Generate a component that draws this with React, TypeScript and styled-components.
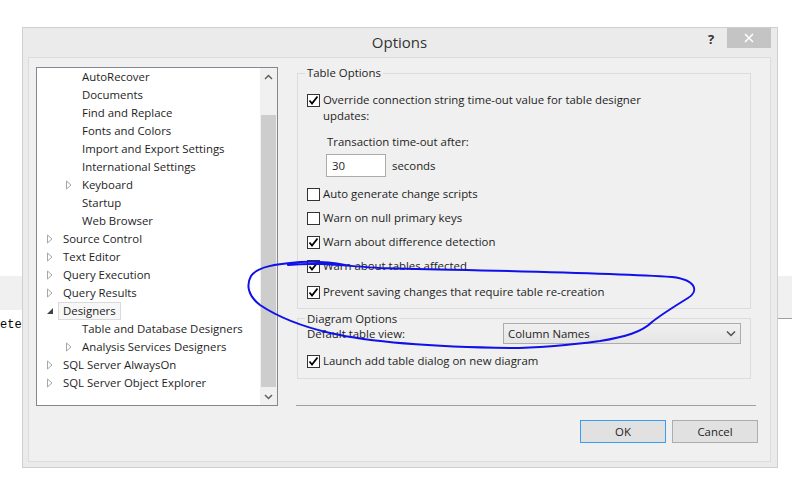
import styled, { createGlobalStyle } from 'styled-components';

const GlobalStyle = createGlobalStyle`
    html, body {
        margin: 0;
        padding: 0;
        background: #ffffff;
    }
    body {
        font-family: "Open Sans", "Noto Sans", sans-serif;
        font-size: 11.4px;
        color: #1e1e1e;
    }
`;

const Page = styled.div`
    position: relative;
    width: 792px;
    height: 477px;
    overflow: hidden;
    background: #ffffff;
`;

/* stuff from the window behind the dialog */
const Backdrop = styled.div`
    display: flex;
    flex-direction: column;
    padding-top: 276px;
`;

const BandRow = styled.div`
    display: flex;
    justify-content: space-between;
    align-items: flex-start;
`;

const Band = styled.div<{ $w: number; $h: number; $line?: boolean }>`
    width: ${p => p.$w}px;
    height: ${p => p.$h}px;
    background: #f0f0f0;
    border-bottom: ${p => (p.$line ? '1px solid #a0a0a0' : 'none')};
`;

const BehindText = styled.div`
    margin-top: -2px;
    font-family: "Liberation Mono", monospace;
    font-size: 12px;
    line-height: 16px;
    color: #000;
`;

const Dialog = styled.div`
    position: absolute;
    left: 22px;
    top: 27px;
    width: 756px;
    height: 441px;
    box-sizing: border-box;
    border: 1px solid #cfcfcf;
    background: #ebebeb;
    display: flex;
    flex-direction: column;
    padding: 0 6px 5px 5px;
`;

const TitleBar = styled.div`
    position: relative;
    height: 29px;
    display: flex;
    align-items: flex-start;
    justify-content: flex-end;
    flex-shrink: 0;
`;

const Title = styled.div`
    position: absolute;
    left: 0;
    right: 0;
    top: 4px;
    text-align: center;
    font-size: 15px;
    line-height: 20px;
    color: #333;
    pointer-events: none;
`;

const HelpButton = styled.div`
    width: 16px;
    margin-top: 3px;
    margin-right: 8px;
    font-size: 13px;
    font-weight: 700;
    line-height: 16px;
    color: #333;
    text-align: center;
`;

const CloseButton = styled.div`
    width: 44px;
    height: 20px;
    background: #c4c4c4;
    display: flex;
    align-items: center;
    justify-content: center;
`;

const Frame = styled.div`
    flex: 1;
    border: 1px solid #dcdcdc;
    background: #f0f0f0;
    display: flex;
    flex-direction: column;
`;

const TopRow = styled.div`
    display: flex;
    gap: 18px;
    padding: 9px 0 0 7px;
`;

const TreeBox = styled.div`
    width: 242px;
    height: 339px;
    box-sizing: border-box;
    border: 1px solid #828790;
    background: #ffffff;
    display: flex;
`;

const TreeList = styled.div`
    flex: 1;
    overflow: hidden;
    padding-top: 0;
`;

const TreeRow = styled.div<{ $level: number }>`
    height: 18px;
    display: flex;
    align-items: center;
    padding-left: ${p => (p.$level === 0 ? 9 : 28)}px;
`;

const Expander = styled.div`
    width: 16px;
    height: 18px;
    display: flex;
    align-items: center;
    justify-content: flex-start;
`;

const TreeLabel = styled.span<{ $selected?: boolean }>`
    line-height: 16px;
    padding: 0 4px;
    margin-left: -4px;
    border: 1px solid ${p => (p.$selected ? '#dadada' : 'transparent')};
    background: ${p => (p.$selected ? '#f7f7f7' : 'transparent')};
    white-space: nowrap;
`;

const ScrollBar = styled.div`
    width: 17px;
    background: #f0f0f0;
    display: flex;
    flex-direction: column;
`;

const ScrollArrow = styled.div`
    height: 17px;
    display: flex;
    align-items: center;
    justify-content: center;
    flex-shrink: 0;
`;

const ScrollTrack = styled.div`
    flex: 1;
    display: flex;
    flex-direction: column;
    padding: 30px 1px 1px;
`;

const ScrollThumb = styled.div`
    flex: 1;
    background: #cdcdcd;
`;

const RightColumn = styled.div`
    width: 460px;
    height: 339px;
    display: flex;
    flex-direction: column;
`;

const GroupBox = styled.div<{ $top: number; $bottom: number }>`
    margin: ${p => p.$top}px 5px 0 1px;
    border: 1px solid #dcdcdc;
    padding: 0 9px ${p => p.$bottom}px 9px;
    display: flex;
    flex-direction: column;
`;

const Legend = styled.div<{ $drop?: number }>`
    align-self: flex-start;
    margin: ${p => -9 + (p.$drop ?? 0)}px 0 0 -2px;
    padding: 0 2px;
    line-height: 16px;
    background: #f0f0f0;
`;

const CheckRow = styled.div<{ $top: number }>`
    display: flex;
    align-items: flex-start;
    gap: 3px;
    margin-top: ${p => p.$top}px;
    line-height: 16px;
`;

const Box = styled.div`
    width: 13px;
    height: 13px;
    box-sizing: border-box;
    border: 1px solid #333333;
    background: #ffffff;
    margin-top: 2px;
    flex-shrink: 0;
    display: flex;
    align-items: center;
    justify-content: center;
`;

const FieldLabel = styled.div<{ $top: number; $indent: number }>`
    margin: ${p => p.$top}px 0 0 ${p => p.$indent}px;
    line-height: 16px;
`;

const InlineRow = styled.div<{ $top: number; $indent: number }>`
    display: flex;
    align-items: center;
    gap: 6px;
    margin: ${p => p.$top}px 0 0 ${p => p.$indent}px;
    line-height: 16px;
`;

const TextInput = styled.div`
    width: 60px;
    height: 23px;
    box-sizing: border-box;
    border: 1px solid #ababab;
    background: #ffffff;
    padding-left: 5px;
    line-height: 21px;
`;

const Combo = styled.div`
    margin-left: auto;
    width: 238px;
    height: 21px;
    box-sizing: border-box;
    border: 1px solid #acacac;
    background: linear-gradient(#f0f0f0, #e5e5e5);
    display: flex;
    align-items: center;
    justify-content: space-between;
    padding: 0 4px 0 4px;
`;

const Separator = styled.div`
    margin-top: auto;
    height: 1px;
    background: #a0a0a0;
`;

const Footer = styled.div`
    display: flex;
    justify-content: flex-end;
    gap: 6px;
    padding: 14px 12px 0 0;
`;

const Button = styled.div<{ $default?: boolean }>`
    width: 86px;
    height: 23px;
    box-sizing: border-box;
    border: 1px solid ${p => (p.$default ? '#3c9cf0' : '#adadad')};
    background: #e1e1e1;
    display: flex;
    align-items: center;
    justify-content: center;
    color: #1e1e1e;
`;

const Scribble = styled.svg`
    position: absolute;
    left: 0;
    top: 0;
    pointer-events: none;
`;

function Check() {
    return (
        <svg width="11" height="11" viewBox="0 0 11 11">
            <path d="M1.5 5.5 L4 8.5 L9.5 1.5" fill="none" stroke="#000" strokeWidth="1.8" />
        </svg>
    );
}

function CheckBox({ checked }: { checked: boolean }) {
    return <Box>{checked && <Check />}</Box>;
}

function Triangle({ open }: { open?: boolean }) {
    if (open) {
        return (
            <svg width="8" height="8" viewBox="0 0 8 8">
                <path d="M7 1 L7 7 L1 7 Z" fill="#444" />
            </svg>
        );
    }
    return (
        <svg width="8" height="10" viewBox="0 0 8 10">
            <path d="M1.5 1 L6 5 L1.5 9 Z" fill="none" stroke="#a6a6a6" strokeWidth="1" />
        </svg>
    );
}

type Node = { label: string; level: number; expander?: 'closed' | 'open'; selected?: boolean };

const treeNodes: Node[] = [
    { label: 'AutoRecover', level: 1 },
    { label: 'Documents', level: 1 },
    { label: 'Find and Replace', level: 1 },
    { label: 'Fonts and Colors', level: 1 },
    { label: 'Import and Export Settings', level: 1 },
    { label: 'International Settings', level: 1 },
    { label: 'Keyboard', level: 1, expander: 'closed' },
    { label: 'Startup', level: 1 },
    { label: 'Web Browser', level: 1 },
    { label: 'Source Control', level: 0, expander: 'closed' },
    { label: 'Text Editor', level: 0, expander: 'closed' },
    { label: 'Query Execution', level: 0, expander: 'closed' },
    { label: 'Query Results', level: 0, expander: 'closed' },
    { label: 'Designers', level: 0, expander: 'open', selected: true },
    { label: 'Table and Database Designers', level: 1 },
    { label: 'Analysis Services Designers', level: 1, expander: 'closed' },
    { label: 'SQL Server AlwaysOn', level: 0, expander: 'closed' },
    { label: 'SQL Server Object Explorer', level: 0, expander: 'closed' },
];

const checks = [
    { label: 'Auto generate change scripts', checked: false, top: 9 },
    { label: 'Warn on null primary keys', checked: false, top: 8 },
    { label: 'Warn about difference detection', checked: true, top: 8 },
    { label: 'Warn about tables affected', checked: true, top: 8 },
    { label: 'Prevent saving changes that require table re-creation', checked: true, top: 10 },
];

export default function App() {
    return (
        <Page>
            <GlobalStyle />
            <Backdrop>
                <BandRow>
                    <Band $w={22} $h={34} />
                    <Band $w={14} $h={42} $line />
                </BandRow>
                <BehindText>ete</BehindText>
            </Backdrop>

            <Dialog>
                <TitleBar>
                    <Title>Options</Title>
                    <HelpButton>?</HelpButton>
                    <CloseButton>
                        <svg width="10" height="10" viewBox="0 0 10 10">
                            <path d="M1 1 L9 9 M9 1 L1 9" stroke="#ffffff" strokeWidth="1.6" />
                        </svg>
                    </CloseButton>
                </TitleBar>

                <Frame>
                    <TopRow>
                        <TreeBox>
                            <TreeList>
                                {treeNodes.map(n => (
                                    <TreeRow key={n.label} $level={n.level}>
                                        <Expander>
                                            {n.expander && <Triangle open={n.expander === 'open'} />}
                                        </Expander>
                                        <TreeLabel $selected={n.selected}>{n.label}</TreeLabel>
                                    </TreeRow>
                                ))}
                            </TreeList>
                            <ScrollBar>
                                <ScrollArrow>
                                    <svg width="9" height="6" viewBox="0 0 9 6">
                                        <path d="M1 5 L4.5 1.5 L8 5" fill="none" stroke="#606060" strokeWidth="1.5" />
                                    </svg>
                                </ScrollArrow>
                                <ScrollTrack>
                                    <ScrollThumb />
                                </ScrollTrack>
                                <ScrollArrow>
                                    <svg width="9" height="6" viewBox="0 0 9 6">
                                        <path d="M1 1 L4.5 4.5 L8 1" fill="none" stroke="#606060" strokeWidth="1.5" />
                                    </svg>
                                </ScrollArrow>
                            </ScrollBar>
                        </TreeBox>

                        <RightColumn>
                            <GroupBox $top={6} $bottom={8}>
                                <Legend>Table Options</Legend>
                                <CheckRow $top={11}>
                                    <CheckBox checked />
                                    <div>
                                        Override connection string time-out value for table designer
                                        <br />
                                        updates:
                                    </div>
                                </CheckRow>
                                <FieldLabel $top={10} $indent={20}>Transaction time-out after:</FieldLabel>
                                <InlineRow $top={4} $indent={19}>
                                    <TextInput>30</TextInput>
                                    <span>seconds</span>
                                </InlineRow>
                                {checks.map(c => (
                                    <CheckRow key={c.label} $top={c.top}>
                                        <CheckBox checked={c.checked} />
                                        <span>{c.label}</span>
                                    </CheckRow>
                                ))}
                            </GroupBox>

                            <GroupBox $top={9} $bottom={9}>
                                <Legend $drop={1}>Diagram Options</Legend>
                                <InlineRow $top={-4} $indent={0}>
                                    <span>Default table view:</span>
                                    <Combo>
                                        <span>Column Names</span>
                                        <svg width="10" height="7" viewBox="0 0 10 7">
                                            <path d="M1 1.5 L5 5.5 L9 1.5" fill="none" stroke="#505050" strokeWidth="1.5" />
                                        </svg>
                                    </Combo>
                                </InlineRow>
                                <CheckRow $top={9}>
                                    <CheckBox checked />
                                    <span>Launch add table dialog on new diagram</span>
                                </CheckRow>
                            </GroupBox>

                            <Separator />
                        </RightColumn>
                    </TopRow>

                    <Footer>
                        <Button $default>OK</Button>
                        <Button>Cancel</Button>
                    </Footer>
                </Frame>
            </Dialog>

            <Scribble width="792" height="477" viewBox="0 0 792 477">
                <path
                    d="M288 265 C320 262, 345 266, 380 268 C450 270, 600 272, 672 277 C698 280, 698 292, 688 298 C675 306, 662 314, 652 322 C642 332, 625 337, 600 341 C570 345, 545 348, 510 348 C440 347, 370 342, 330 333 C300 326, 275 315, 260 305 C248 296, 246 285, 251 276 C257 267, 275 264, 300 262 C320 261, 335 263, 345 265"
                    fill="none"
                    stroke="#1010e8"
                    strokeWidth="2"
                    strokeLinecap="round"
                />
            </Scribble>
        </Page>
    );
}
